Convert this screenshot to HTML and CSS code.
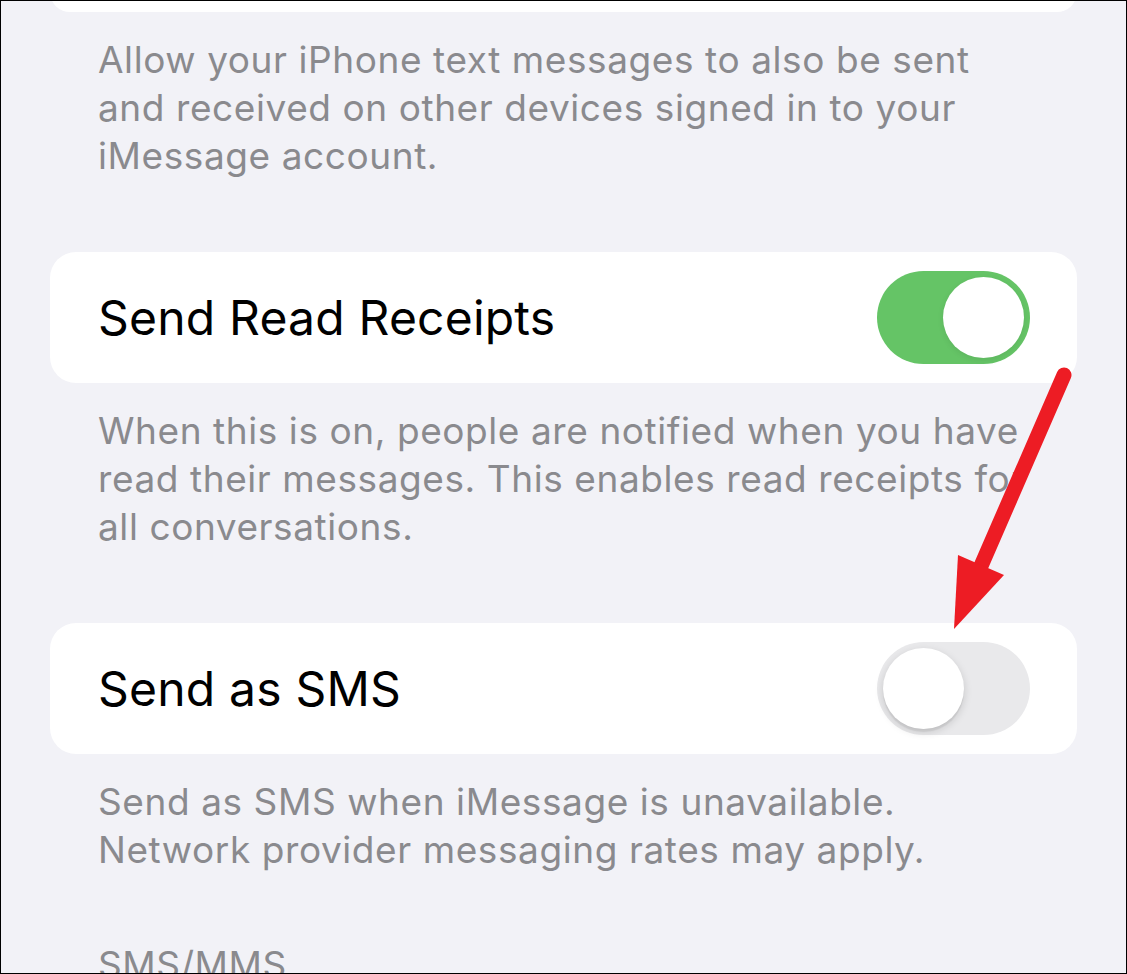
FILE: index.html
```html
<!DOCTYPE html>
<html lang="en">
<head>
  <meta charset="UTF-8" />
  <meta name="viewport" content="width=device-width, initial-scale=1" />
  <title>Messages</title>
  <link rel="stylesheet" href="styles.css">
</head>
<body>
  <div class="screen">
    <div class="card card-stub"></div>

    <p class="note">Allow your iPhone text messages to also be sent and received on other devices signed in to your iMessage account.</p>

    <div class="card">
      <span class="label">Send Read Receipts</span>
      <span class="switch on"><span class="knob"></span></span>
    </div>

    <p class="note">When this is on, people are notified when you have read their messages. This enables read receipts for all conversations.</p>

    <div class="card">
      <span class="label">Send as SMS</span>
      <span class="switch"><span class="knob"></span></span>
    </div>

    <p class="note">Send as SMS when iMessage is unavailable. Network provider messaging rates may apply.</p>

    <h3 class="section-title">SMS/MMS</h3>

    <!-- red pointer drawn over the list -->
    <svg class="pointer" width="1127" height="974" viewBox="0 0 1127 974">
      <line x1="1064" y1="375" x2="981" y2="566" stroke="#ed1c24" stroke-width="15" stroke-linecap="round" />
      <polygon points="958,555 1004,575 954,629" fill="#ed1c24" />
    </svg>
  </div>
</body>
</html>
```

FILE: styles.css
```css
body {
  margin: 0;
  font-family: Inter, "Noto Sans", "Liberation Sans", sans-serif;
}
.screen {
  position: relative;
  width: 1127px;
  height: 974px;
  box-sizing: border-box;
  border: 1px solid #000;
  background: #f2f2f7;
  overflow: hidden;
  padding: 0 49px;
}
.card {
  display: flex;
  align-items: center;
  justify-content: space-between;
  height: 131px;
  margin-top: 72px;
  padding: 0 47px 0 48px;
  background: #fff;
  border-radius: 26px;
}
.card-stub {
  height: 40px;
  margin-top: -29px;
}
.label {
  font-size: 48px;
  color: #000;
  letter-spacing: 0.2px;
}
.note {
  margin: 24px 0 0;
  padding: 0 48px;
  font-size: 37px;
  line-height: 48px;
  color: #8a8a8e;
  letter-spacing: 0.58px;
}
.section-title {
  margin: 67px 0 0;
  padding: 0 48px;
  font-size: 37px;
  line-height: 48px;
  font-weight: normal;
  color: #8a8a8e;
  letter-spacing: 0.58px;
  text-transform: uppercase;
}
.switch {
  position: relative;
  width: 153px;
  height: 93px;
  border-radius: 47px;
  background: #e9e9eb;
  flex-shrink: 0;
}
.switch.on {
  background: #65c466;
}
.knob {
  position: absolute;
  top: 6px;
  left: 6px;
  width: 81px;
  height: 81px;
  border-radius: 50%;
  background: #fff;
  box-shadow: 0 3px 8px rgba(0,0,0,0.15), 0 3px 1px rgba(0,0,0,0.06);
}
.switch.on .knob {
  left: auto;
  right: 6px;
  box-shadow: 0 2px 6px rgba(0,0,0,0.08);
}
.pointer {
  position: absolute;
  top: -1px;
  left: -1px;
}
```
